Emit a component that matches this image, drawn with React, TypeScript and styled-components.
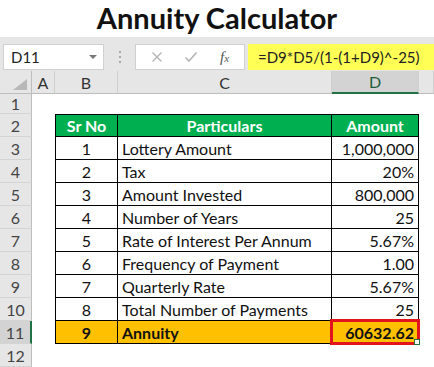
import React from 'react';
import styled, { createGlobalStyle } from 'styled-components';

const GlobalStyle = createGlobalStyle`
  html, body {
    margin: 0;
    padding: 0;
    background: #ffffff;
  }
  body {
    font-family: Lato, "Open Sans", sans-serif;
    overflow: hidden;
  }
`;

const Page = styled.div`
  width: 434px;
  height: 367px;
  overflow: hidden;
  background: #ffffff;
  display: flex;
  flex-direction: column;
`;

const Title = styled.h1`
  margin: 0;
  height: 43px;
  display: flex;
  align-items: center;
  justify-content: center;
  font-family: Lato, sans-serif;
  font-weight: 700;
  font-size: 29px;
  color: #111;
  padding-bottom: 2px;
  box-sizing: border-box;
`;

const Toolbar = styled.div`
  height: 45px;
  background: #e6e6e6;
  display: flex;
  align-items: flex-start;
  padding-top: 7px;
  box-sizing: border-box;
`;

const NameBox = styled.div`
  margin-left: 3px;
  width: 101px;
  height: 26px;
  box-sizing: border-box;
  background: #fff;
  border: 1px solid #d0d0d0;
  display: flex;
  align-items: center;
  justify-content: space-between;
  padding: 0 6px 0 7px;
  font-size: 15px;
  color: #222;
`;

const Caret = styled.span`
  width: 0;
  height: 0;
  border-left: 4px solid transparent;
  border-right: 4px solid transparent;
  border-top: 4px solid #777;
`;

const Grip = styled.div`
  width: 31px;
  height: 26px;
  display: flex;
  flex-direction: column;
  align-items: center;
  justify-content: center;
  gap: 3px;
  span {
    width: 2px;
    height: 2px;
    background: #a8a8a8;
  }
`;

const FxBox = styled.div`
  width: 110px;
  height: 26px;
  box-sizing: border-box;
  background: #fff;
  border: 1px solid #d0d0d0;
  display: flex;
  align-items: center;
  justify-content: space-around;
  padding: 0 4px;
`;

const FxLabel = styled.span`
  font-family: "Liberation Serif", serif;
  font-style: italic;
  font-size: 15px;
  color: #555;
  sub {
    font-size: 11px;
    vertical-align: baseline;
  }
`;

const FormulaBar = styled.div`
  margin-left: 3px;
  flex: 1;
  height: 26px;
  background: #ffff55;
  display: flex;
  align-items: center;
  padding-left: 10px;
  font-size: 15px;
  color: #222;
`;

const Sheet = styled.div`
  display: grid;
  grid-template-columns: 32px 23px 63px 214px 87px 1fr;
  grid-template-rows: 23px 20px repeat(11, 23px);
  background: #fff;
`;

const ColHead = styled.div<{ $active?: boolean }>`
  background: ${(p) => (p.$active ? '#d3d3d3' : '#e6e6e6')};
  border-right: 1px solid #cfcfcf;
  border-bottom: ${(p) => (p.$active ? '2px solid #217346' : '1px solid #bdbdbd')};
  box-sizing: border-box;
  display: flex;
  align-items: center;
  justify-content: center;
  font-size: 16px;
  color: ${(p) => (p.$active ? '#1e5c3a' : '#333')};
`;

const Corner = styled.div`
  background: #e6e6e6;
  border-right: 1px solid #bdbdbd;
  border-bottom: 1px solid #bdbdbd;
  box-sizing: border-box;
  display: flex;
  align-items: flex-end;
  justify-content: flex-end;
  padding: 0 4px 3px 0;
`;

const RowHead = styled.div<{ $active?: boolean }>`
  background: ${(p) => (p.$active ? '#d3d3d3' : '#e6e6e6')};
  border-bottom: 1px solid #d4d4d4;
  border-right: ${(p) => (p.$active ? '2px solid #217346' : '1px solid #bdbdbd')};
  box-sizing: border-box;
  display: flex;
  align-items: center;
  justify-content: center;
  font-size: 16px;
  color: #444;
`;

const Blank = styled.div`
  background: #fff;
`;

type Kind = 'head' | 'body' | 'total';

const Cell = styled.div<{ $kind: Kind; $align: 'left' | 'center' | 'right'; $first?: boolean; $top?: boolean }>`
  position: relative;
  box-sizing: border-box;
  display: flex;
  align-items: center;
  justify-content: ${(p) => (p.$align === 'left' ? 'flex-start' : p.$align === 'right' ? 'flex-end' : 'center')};
  padding: 0 4px 0 4px;
  font-size: 16px;
  font-weight: ${(p) => (p.$kind === 'body' ? 400 : 700)};
  color: ${(p) => (p.$kind === 'head' ? '#ffffff' : '#111')};
  background: ${(p) => (p.$kind === 'head' ? '#00b050' : p.$kind === 'total' ? '#ffc000' : '#ffffff')};
  border-right: 1px solid #000;
  border-bottom: 1px solid #000;
  border-left: ${(p) => (p.$first ? '1px solid #000' : 'none')};
  border-top: ${(p) => (p.$top ? '1px solid #000' : 'none')};
  white-space: nowrap;
`;

const Selection = styled.div`
  position: absolute;
  left: -2px;
  top: -2px;
  right: -2px;
  bottom: -2px;
  border: 3px solid #e3141b;
  pointer-events: none;
  &::after {
    content: '';
    position: absolute;
    right: -3px;
    bottom: -3px;
    width: 4px;
    height: 4px;
    background: #fff;
    border: 1px solid #217346;
  }
`;

const rows: [string, string, string][] = [
  ['1', 'Lottery Amount', '1,000,000'],
  ['2', 'Tax', '20%'],
  ['3', 'Amount Invested', '800,000'],
  ['4', 'Number of Years', '25'],
  ['5', 'Rate of Interest Per Annum', '5.67%'],
  ['6', 'Frequency of Payment', '1.00'],
  ['7', 'Quarterly Rate', '5.67%'],
  ['8', 'Total Number of Payments', '25'],
];

const CrossIcon = () => (
  <svg width="12" height="12" viewBox="0 0 12 12">
    <path d="M1.5 1.5 L10.5 10.5 M10.5 1.5 L1.5 10.5" stroke="#b5b5b5" strokeWidth="1.4" fill="none" />
  </svg>
);

const CheckIcon = () => (
  <svg width="14" height="12" viewBox="0 0 14 12">
    <path d="M1.5 6.5 L5 10 L12.5 1.5" stroke="#b5b5b5" strokeWidth="1.6" fill="none" />
  </svg>
);

const CornerTriangle = () => (
  <svg width="14" height="11" viewBox="0 0 14 11">
    <polygon points="14,0 14,11 0,11" fill="#b8b8b8" />
  </svg>
);

export default function App() {
  return (
    <Page>
      <GlobalStyle />
      <Title>Annuity Calculator</Title>
      <Toolbar>
        <NameBox>
          D11
          <Caret />
        </NameBox>
        <Grip>
          <span />
          <span />
          <span />
        </Grip>
        <FxBox>
          <CrossIcon />
          <CheckIcon />
          <FxLabel>
            f<sub>x</sub>
          </FxLabel>
        </FxBox>
        <FormulaBar>=D9*D5/(1-(1+D9)^-25)</FormulaBar>
      </Toolbar>
      <Sheet>
        <Corner>
          <CornerTriangle />
        </Corner>
        <ColHead>A</ColHead>
        <ColHead>B</ColHead>
        <ColHead>C</ColHead>
        <ColHead $active>D</ColHead>
        <ColHead />

        <RowHead>1</RowHead>
        <Blank />
        <Blank />
        <Blank />
        <Blank />
        <Blank />

        <RowHead>2</RowHead>
        <Blank />
        <Cell $kind="head" $align="center" $first $top>Sr No</Cell>
        <Cell $kind="head" $align="center" $top>Particulars</Cell>
        <Cell $kind="head" $align="center" $top>Amount</Cell>
        <Blank />

        {rows.map(([n, label, value], i) => (
          <React.Fragment key={n}>
            <RowHead>{i + 3}</RowHead>
            <Blank />
            <Cell $kind="body" $align="center" $first>{n}</Cell>
            <Cell $kind="body" $align="left">{label}</Cell>
            <Cell $kind="body" $align="right">{value}</Cell>
            <Blank />
          </React.Fragment>
        ))}

        <RowHead $active>11</RowHead>
        <Blank />
        <Cell $kind="total" $align="center" $first>9</Cell>
        <Cell $kind="total" $align="left">Annuity</Cell>
        <Cell $kind="total" $align="right">
          60632.62
          <Selection />
        </Cell>
        <Blank />

        <RowHead>12</RowHead>
        <Blank />
        <Blank />
        <Blank />
        <Blank />
        <Blank />
      </Sheet>
    </Page>
  );
}
